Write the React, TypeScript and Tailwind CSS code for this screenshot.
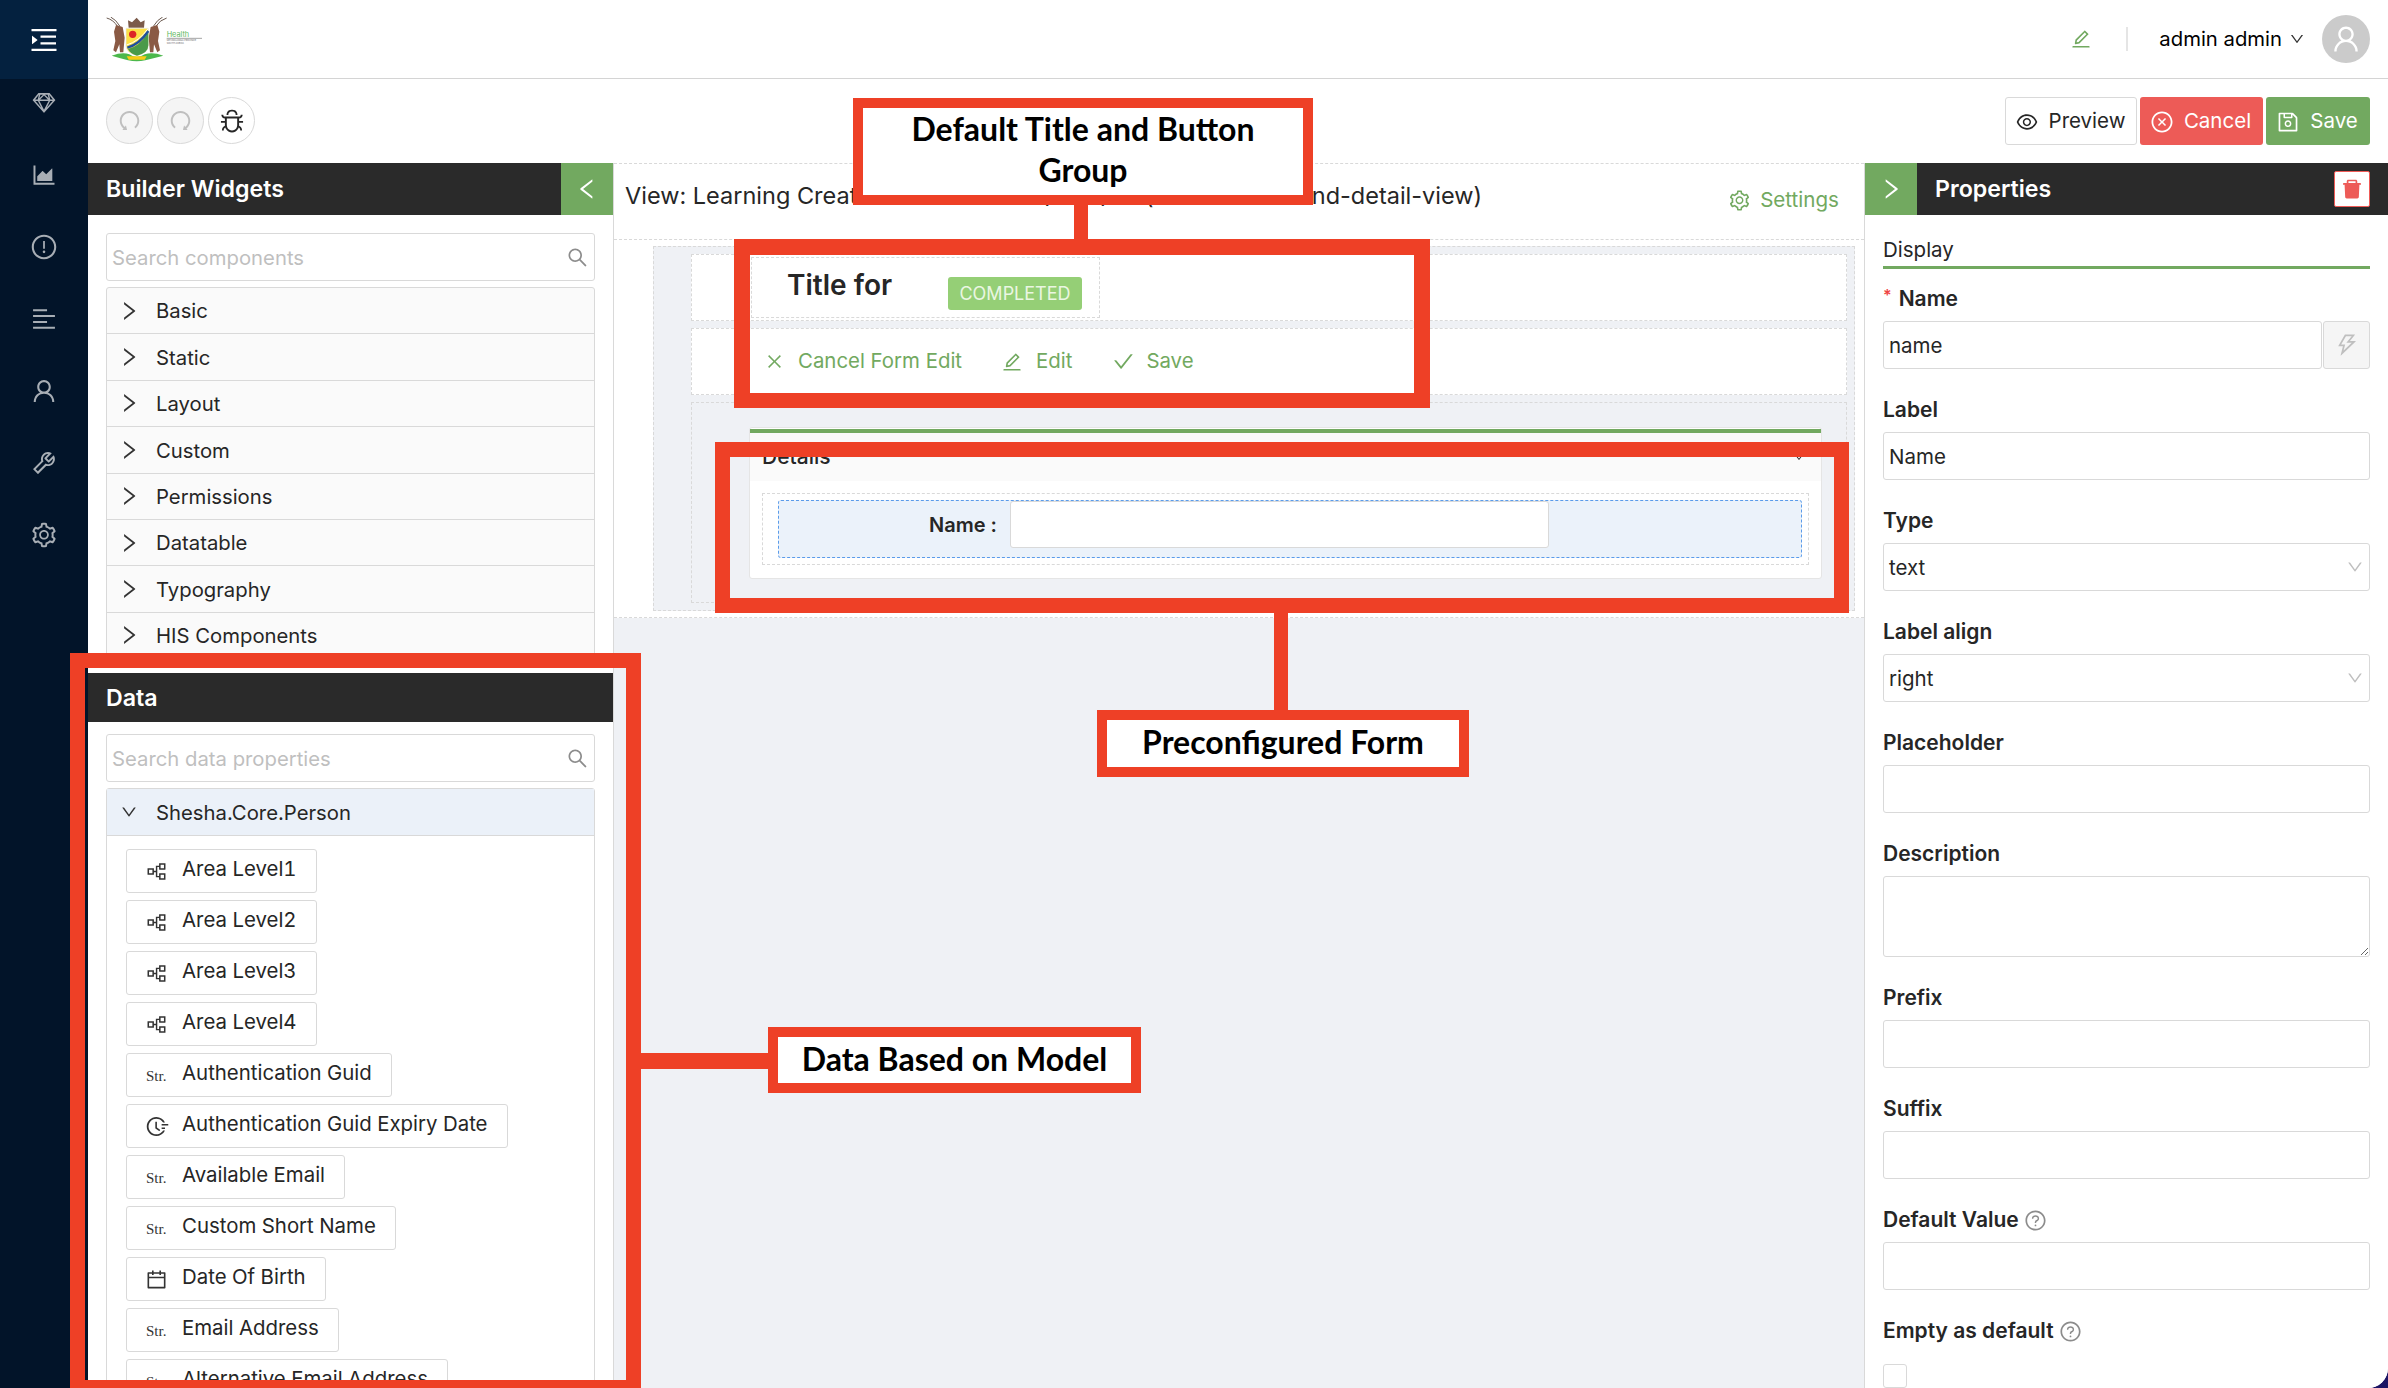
import type { ReactNode } from "react";
import {
  AiFillDelete,
  AiOutlineAlignLeft,
  AiOutlineAreaChart,
  AiOutlineBug,
  AiOutlineCalendar,
  AiOutlineCheck,
  AiOutlineClose,
  AiOutlineCloseCircle,
  AiOutlineDown,
  AiOutlineEdit,
  AiOutlineExclamationCircle,
  AiOutlineEye,
  AiOutlineFieldTime,
  AiOutlineLeft,
  AiOutlineMenuUnfold,
  AiOutlinePartition,
  AiOutlineQuestionCircle,
  AiOutlineRedo,
  AiOutlineRight,
  AiOutlineSave,
  AiOutlineSearch,
  AiOutlineSetting,
  AiOutlineSketch,
  AiOutlineThunderbolt,
  AiOutlineTool,
  AiOutlineUndo,
  AiOutlineUser,
} from "react-icons/ai";

const widgetGroups = ["Basic", "Static", "Layout", "Custom", "Permissions", "Datatable", "Typography", "HIS Components"];

const dataProps: { label: string; kind: "ref" | "str" | "time" | "date" }[] = [
  { label: "Area Level1", kind: "ref" },
  { label: "Area Level2", kind: "ref" },
  { label: "Area Level3", kind: "ref" },
  { label: "Area Level4", kind: "ref" },
  { label: "Authentication Guid", kind: "str" },
  { label: "Authentication Guid Expiry Date", kind: "time" },
  { label: "Available Email", kind: "str" },
  { label: "Custom Short Name", kind: "str" },
  { label: "Date Of Birth", kind: "date" },
  { label: "Email Address", kind: "str" },
  { label: "Alternative Email Address", kind: "str" },
];

function Logo() {
  return (
    <svg width="96" height="45" viewBox="0 0 288 135" fill="none">
      {/* horns */}
      <path d="M2 3 Q22 8 36 30 M14 0 Q30 8 42 28" stroke="#6b5a50" strokeWidth="3" />
      <path d="M182 3 Q162 8 148 30 M170 0 Q154 8 142 28" stroke="#6b5a50" strokeWidth="3" />
      {/* kudus */}
      <path d="M30 24 L50 30 L56 62 L52 106 L42 106 L40 82 L30 106 L22 100 L28 72 L24 44 Z" fill="#8a5a44" />
      <path d="M154 24 L134 30 L128 62 L132 106 L142 106 L144 82 L154 106 L162 100 L156 72 L160 44 Z" fill="#8a5a44" />
      {/* crown */}
      <path d="M68 32 L66 10 L78 16 L92 2 L104 16 L116 10 L114 32 Z" fill="#7b5a4a" />
      {/* shield */}
      <path d="M60 34 H127 V85 Q127 108 93 116 Q60 108 60 85 Z" fill="#fde047" stroke="#e5e7eb" strokeWidth="2" />
      <path d="M127 46 V85 Q127 108 93 116 Q72 110 66 96 Q100 90 127 46 Z" fill="#4a9a4a" />
      <path d="M64 92 Q100 82 127 42" stroke="#1d4fa0" strokeWidth="7" />
      <path d="M62 84 Q98 74 127 34" stroke="#ffffff" strokeWidth="3" />
      <circle cx="80" cy="52" r="11" fill="#dc2626" />
      {/* banner */}
      <path d="M17 116 Q50 104 70 112 Q92 128 116 112 Q140 104 172 116 Q140 124 118 130 Q92 136 66 130 Q44 124 17 116 Z" fill="#4cb84c" />
      <path d="M62 118 H122 L116 128 H68 Z" fill="#facc15" />
      <text x="182" y="60" fontSize="22" fill="#5cb85c" fontFamily="Inter, sans-serif">Health</text>
      <path d="M182 64 H288" stroke="#777" strokeWidth="2" />
      <text x="182" y="72" fontSize="7" fill="#666" fontFamily="Inter, sans-serif">MPUMALANGA PROVINCE</text>
      <text x="182" y="80" fontSize="7" fill="#666" fontFamily="Inter, sans-serif">SOUTH AFRICA</text>
    </svg>
  );
}

function Sidebar() {
  const items = [AiOutlineSketch, AiOutlineAreaChart, AiOutlineExclamationCircle, AiOutlineAlignLeft, AiOutlineUser, AiOutlineTool, AiOutlineSetting];
  return (
    <aside className="w-[88px] h-full shrink-0 bg-[#021429] flex flex-col">
      <div className="h-[79px] bg-[#04213f] flex items-center justify-center text-white">
        <AiOutlineMenuUnfold size={32} />
      </div>
      <div className="flex flex-col items-center gap-[44px] pt-[10px] text-[#a8aeb5]">
        {items.map((Icon, i) => (
          <Icon key={i} size={28} />
        ))}
      </div>
    </aside>
  );
}

function SearchBox({ placeholder }: { placeholder: string }) {
  return (
    <div className="h-[48px] border border-[#d9d9d9] rounded-[3px] flex items-center pl-[5px] pr-[5px] bg-white">
      <input
        readOnly
        placeholder={placeholder}
        className="flex-1 min-w-0 pt-[2px] outline-none text-[20.3px] placeholder:text-[#bfbfbf]"
      />
      <AiOutlineSearch size={23} className="text-[#8c8c8c]" />
    </div>
  );
}

function PropIcon({ kind }: { kind: string }) {
  if (kind === "ref") return <AiOutlinePartition size={23} className="text-[#333]" />;
  if (kind === "time") return <AiOutlineFieldTime size={25} className="text-[#333]" />;
  if (kind === "date") return <AiOutlineCalendar size={23} className="text-[#333]" />;
  return <span className="pl-[1px] pt-[3px] text-[15px] text-[#333] font-['Liberation_Serif',serif]">Str.</span>;
}

function LeftPanel() {
  return (
    <div className="w-[526px] shrink-0 h-full bg-white border-r border-[#d9d9d9] overflow-hidden">
      <div className="h-[490px] overflow-hidden">
        <div className="h-[52px] w-[525px] bg-[#2a2a2a] flex items-center justify-between">
          <span className="pl-[18px] text-white text-[23.2px] font-semibold">Builder Widgets</span>
          <span className="w-[52px] h-full bg-[#72a960] flex items-center justify-center text-white">
            <AiOutlineLeft size={26} />
          </span>
        </div>
        <div className="pl-[18px] pr-[18px] pt-[18px] w-[525px]">
          <SearchBox placeholder="Search components" />
          <div className="mt-[6px] border border-[#d9d9d9] rounded-t-[3px] bg-[#fafafa]">
            {widgetGroups.map((g) => (
              <div key={g} className="h-[46.4px] border-b border-[#d9d9d9] flex items-center text-[20.3px] text-[#262626]">
                <AiOutlineRight size={24} className="ml-[10px] mr-[15px] text-[#333]" />
                <span className="pt-[2px]">{g}</span>
              </div>
            ))}
          </div>
        </div>
      </div>
      <div className="pt-[20px]">
        <div className="h-[49px] w-[525px] bg-[#2a2a2a] flex items-center pl-[18px] pt-[2px] text-white text-[23.2px] font-semibold">Data</div>
        <div className="px-[18px] pt-[12px] w-[525px]">
          <SearchBox placeholder="Search data properties" />
          <div className="mt-[6px] border border-[#d9d9d9] rounded-t-[3px]">
            <div className="h-[47px] bg-[#ebf1f9] border-b border-[#d9d9d9] flex items-center text-[20.3px] text-[#262626]">
              <AiOutlineDown size={18} className="ml-[13px] mr-[18px] text-[#333]" />
              <span className="pt-[2px]">Shesha.Core.Person</span>
            </div>
            <div className="flex flex-col items-start gap-[7px] pl-[19px] pt-[13px]">
              {dataProps.map((p) => (
                <div key={p.label} className="h-[44px] shrink-0 border border-[#d9d9d9] rounded-[3px] bg-white flex items-center pr-[19px] text-[20.4px] text-[#262626]">
                  <span className="w-[55px] pl-[18px] flex items-center">
                    <PropIcon kind={p.kind} />
                  </span>
                  <span className="-mt-[3px] tabular-nums">{p.label}</span>
                </div>
              ))}
            </div>
          </div>
        </div>
      </div>
    </div>
  );
}

function CenterPanel() {
  return (
    <div className="w-[1250px] shrink-0 h-full bg-[#eff1f5]">
      <div className="h-[77px] bg-white border-t border-b border-dashed border-[#d9d9d9] flex items-start pl-[11px] pr-[25px]">
        <h2 className="pt-[14px] text-[23.5px] text-[#262626] whitespace-nowrap">
          <span className="inline-block w-[416px]">View: Learning Creation</span>
          <span className="inline-block w-[104px]">(1.0.0)</span>
          <span>(module-edit-and-detail-view)</span>
        </h2>
        <span className="ml-auto pt-[21px] flex items-center gap-[9px] text-[20.6px] text-[#72a960]">
          <AiOutlineSetting size={23} />
          Settings
        </span>
      </div>
      <div className="bg-white border-b border-dashed border-[#d9d9d9] pl-[39px] pr-[9px] py-[6px]">
        <div className="bg-[#eff1f5] border border-dashed border-[#d9d9d9] pl-[37px] pr-[7px] py-[7px] h-[365px] flex flex-col gap-[7px]">
          <div className="h-[67px] bg-white border border-dashed border-[#d9d9d9] pl-[59px] pt-[2px]">
            <div className="w-[349px] h-[61px] border border-dashed border-[#d9d9d9] flex items-start pl-[35px]">
              <span className="pt-[7px] text-[28px] font-semibold text-[#262626] w-[161px] leading-[40px]">Title for</span>
              <span className="mt-[19px] h-[33px] w-[134px] rounded-[3px] bg-[#95cf76] text-[#eaf6e2] text-[18px] flex items-center justify-center">COMPLETED</span>
            </div>
          </div>
          <div className="h-[67px] bg-white border border-dashed border-[#d9d9d9] flex items-center pl-[73px] pt-[1px] text-[20.4px] text-[#72a960]">
            <AiOutlineClose size={19} />
            <span className="ml-[14px]">Cancel Form Edit</span>
            <AiOutlineEdit size={22} className="ml-[39px]" />
            <span className="ml-[13px]">Edit</span>
            <AiOutlineCheck size={23} className="ml-[40px]" />
            <span className="ml-[11px]">Save</span>
          </div>
          <div className="h-[202px] border border-dashed border-[#d9d9d9] pl-[57px] pr-[24px] pt-[24px]">
            <div className="h-[152px] bg-white border border-[#e5e5e5] rounded-[3px] pt-[1px]">
              <div className="h-[4px] bg-[#72a960]" />
              <div className="h-[48px] bg-[#fafafa] flex items-center justify-between pl-[12px] pr-[16px] text-[21px] font-medium text-[#262626]">
                <span>Details</span>
                <AiOutlineDown size={12} />
              </div>
              <div className="mx-[12px] mt-[12px] h-[72px] border border-dashed border-[#d9d9d9] pl-[15px] pr-[6px] pt-[6px]">
                <div className="h-[58px] bg-[#ebf2fa] border border-dashed border-[#5a9bea] rounded-[3px] flex items-start">
                  <span className="w-[218px] pt-[9px] text-right text-[20px] font-semibold text-[#262626]">
                    Name<span className="ml-[5px]">:</span>
                  </span>
                  <span className="ml-[13px] w-[539px] h-[47px] bg-white border border-[#d9d9d9] rounded-[3px]" />
                </div>
              </div>
            </div>
          </div>
        </div>
      </div>
    </div>
  );
}

function Field({ label, required, help, children }: { label: string; required?: boolean; help?: boolean; children?: ReactNode }) {
  return (
    <div className="mb-[28px]">
      <div className="h-[24px] mb-[11px] pt-[2px] flex items-center text-[21px] font-semibold text-[#262626]">
        {required && <span className="text-[#ef4444] text-[16px] mr-[7px] -mt-[8px]">*</span>}
        {label}
        {help && <AiOutlineQuestionCircle size={23} className="ml-[5px] text-[#8c8c8c] font-normal" />}
      </div>
      {children}
    </div>
  );
}

const inputCls = "block w-full h-[48px] border border-[#d9d9d9] rounded-[3px] px-[5px] text-[20.5px] text-[#262626] outline-none bg-white";

function Select({ value }: { value: string }) {
  return (
    <div className="h-[48px] border border-[#d9d9d9] rounded-[3px] px-[5px] flex items-center justify-between text-[20.5px] text-[#262626]">
      <span className="pt-[2px]">{value}</span>
      <AiOutlineDown size={18} className="text-[#bfbfbf]" />
    </div>
  );
}

function RightPanel() {
  return (
    <div className="flex-1 h-full bg-white border-l border-[#d9d9d9] overflow-hidden">
      <div className="h-[52px] bg-[#2a2a2a] flex items-center">
        <span className="w-[52px] h-full bg-[#72a960] flex items-center justify-center text-white">
          <AiOutlineRight size={26} />
        </span>
        <span className="pl-[18px] text-white text-[23.2px] font-semibold">Properties</span>
        <span className="ml-auto mr-[18px] w-[36px] h-[36px] bg-white border border-[#ef5b57] rounded-[2px] flex items-center justify-center text-[#ed5b57]">
          <AiFillDelete size={24} />
        </span>
      </div>
      <div className="pl-[18px] pr-[18px] pt-[23px]">
        <div className="h-[31px] border-b-[3px] border-[#72a960] text-[20.5px] text-[#262626] mb-[17px] leading-[24px]">Display</div>
        <Field label="Name" required>
          <div className="flex gap-[1px]">
            <input readOnly value="name" className={inputCls + " flex-1 min-w-0"} />
            <span className="w-[47px] h-[48px] bg-[#f5f5f5] border border-[#d9d9d9] rounded-[3px] flex items-center justify-center text-[#bfbfbf]">
              <AiOutlineThunderbolt size={26} />
            </span>
          </div>
        </Field>
        <Field label="Label">
          <input readOnly value="Name" className={inputCls} />
        </Field>
        <Field label="Type">
          <Select value="text" />
        </Field>
        <Field label="Label align">
          <Select value="right" />
        </Field>
        <Field label="Placeholder">
          <input readOnly className={inputCls} />
        </Field>
        <Field label="Description">
          <textarea readOnly className="block w-full h-[81px] border border-[#d9d9d9] rounded-[3px] outline-none bg-white" />
        </Field>
        <Field label="Prefix">
          <input readOnly className={inputCls} />
        </Field>
        <Field label="Suffix">
          <input readOnly className={inputCls} />
        </Field>
        <Field label="Default Value" help>
          <input readOnly className={inputCls} />
        </Field>
        <div className="h-[24px] pt-[2px] flex items-center text-[21px] font-semibold text-[#262626]">
          Empty as default
          <AiOutlineQuestionCircle size={23} className="ml-[5px] text-[#8c8c8c]" />
        </div>
        <div className="mt-[22px] w-[24px] h-[24px] border border-[#d9d9d9] rounded-[3px]" />
      </div>
    </div>
  );
}

// red annotation boxes drawn on top of the screenshot
function Callouts() {
  const label = "absolute bg-white border-[10px] border-[#ee4026] flex items-center justify-center text-center text-black font-['Lato',sans-serif] font-bold text-[32px]";
  const bar = "absolute bg-[#ee4026]";
  return (
    <>
      <div className={label + " left-[853px] top-[98px] w-[460px] h-[107px] leading-[41px] pb-[5px]"}>
        Default Title and Button
        <br />
        Group
      </div>
      <div className={bar + " left-[1074px] top-[205px] w-[14px] h-[35px]"} />
      <div className="absolute left-[734px] top-[239px] w-[696px] h-[169px] border-[#ee4026] border-x-[16px] border-t-[16px] border-b-[15px]" />
      <div className="absolute left-[715px] top-[442px] w-[1134px] h-[171px] border-[#ee4026] border-[15px]" />
      <div className={bar + " left-[1274px] top-[612px] w-[14px] h-[99px]"} />
      <div className={label + " left-[1097px] top-[710px] w-[372px] h-[67px] pb-[3px]"}>Preconfigured Form</div>
      <div className="absolute left-[70px] top-[653px] w-[571px] h-[735px] border-[#ee4026] border-x-[15px] border-t-[15px] border-b-[8px]" />
      <div className={bar + " left-[640px] top-[1053px] w-[128px] h-[16px]"} />
      <div className={label + " left-[768px] top-[1027px] w-[373px] h-[66px] pb-[3px]"}>Data Based on Model</div>
    </>
  );
}

export default function App() {
  return (
    <div className="relative w-[2388px] h-[1388px] overflow-hidden flex bg-[#1b1464] font-['Inter',sans-serif]">
      <Sidebar />
      <div className="flex-1 min-w-0 h-full flex flex-col bg-white rounded-br-[20px] overflow-hidden">
        <header className="h-[79px] shrink-0 border-b border-[#d4d4d4] flex items-center pl-[18px] pr-[18px]">
          <Logo />
          <AiOutlineEdit size={22} className="ml-auto text-[#72a960]" />
          <span className="ml-[34px] w-[2px] h-[24px] bg-[#e5e5e5]" />
          <span className="ml-[31px] text-[20.3px] text-black">admin admin</span>
          <AiOutlineDown size={16} className="ml-[7px] text-[#333]" />
          <span className="ml-[17px] w-[48px] h-[48px] rounded-full bg-[#cbcbcb] flex items-center justify-center text-white">
            <AiOutlineUser size={32} />
          </span>
        </header>
        <div className="h-[84px] shrink-0 flex items-center pl-[18px] pr-[18px]">
          <div className="flex gap-[4px] -mt-[1px]">
            <span className="w-[47px] h-[47px] rounded-full bg-[#f5f5f5] border border-[#d9d9d9] flex items-center justify-center text-[#bfbfbf]">
              <AiOutlineUndo size={25} />
            </span>
            <span className="w-[47px] h-[47px] rounded-full bg-[#f5f5f5] border border-[#d9d9d9] flex items-center justify-center text-[#bfbfbf]">
              <AiOutlineRedo size={25} />
            </span>
            <span className="w-[47px] h-[47px] rounded-full bg-white border border-[#d9d9d9] flex items-center justify-center text-[#262626]">
              <AiOutlineBug size={26} />
            </span>
          </div>
          <div className="ml-auto flex gap-[3px] text-[20.5px] -mt-[1px]">
            <span className="w-[132px] h-[48px] border border-[#d9d9d9] rounded-[3px] flex items-center justify-center gap-[10px] pt-[2px] pr-[2px] text-[#262626]">
              <AiOutlineEye size={24} />
              Preview
            </span>
            <span className="w-[123px] h-[48px] bg-[#ed5b57] rounded-[3px] flex items-center justify-center gap-[10px] pt-[2px] pr-[2px] text-white">
              <AiOutlineCloseCircle size={24} />
              Cancel
            </span>
            <span className="w-[104px] h-[48px] bg-[#72a960] rounded-[3px] flex items-center justify-center gap-[10px] pt-[2px] pr-[2px] text-white">
              <AiOutlineSave size={24} />
              Save
            </span>
          </div>
        </div>
        <div className="flex-1 min-h-0 flex">
          <LeftPanel />
          <CenterPanel />
          <RightPanel />
        </div>
      </div>
      <Callouts />
    </div>
  );
}
